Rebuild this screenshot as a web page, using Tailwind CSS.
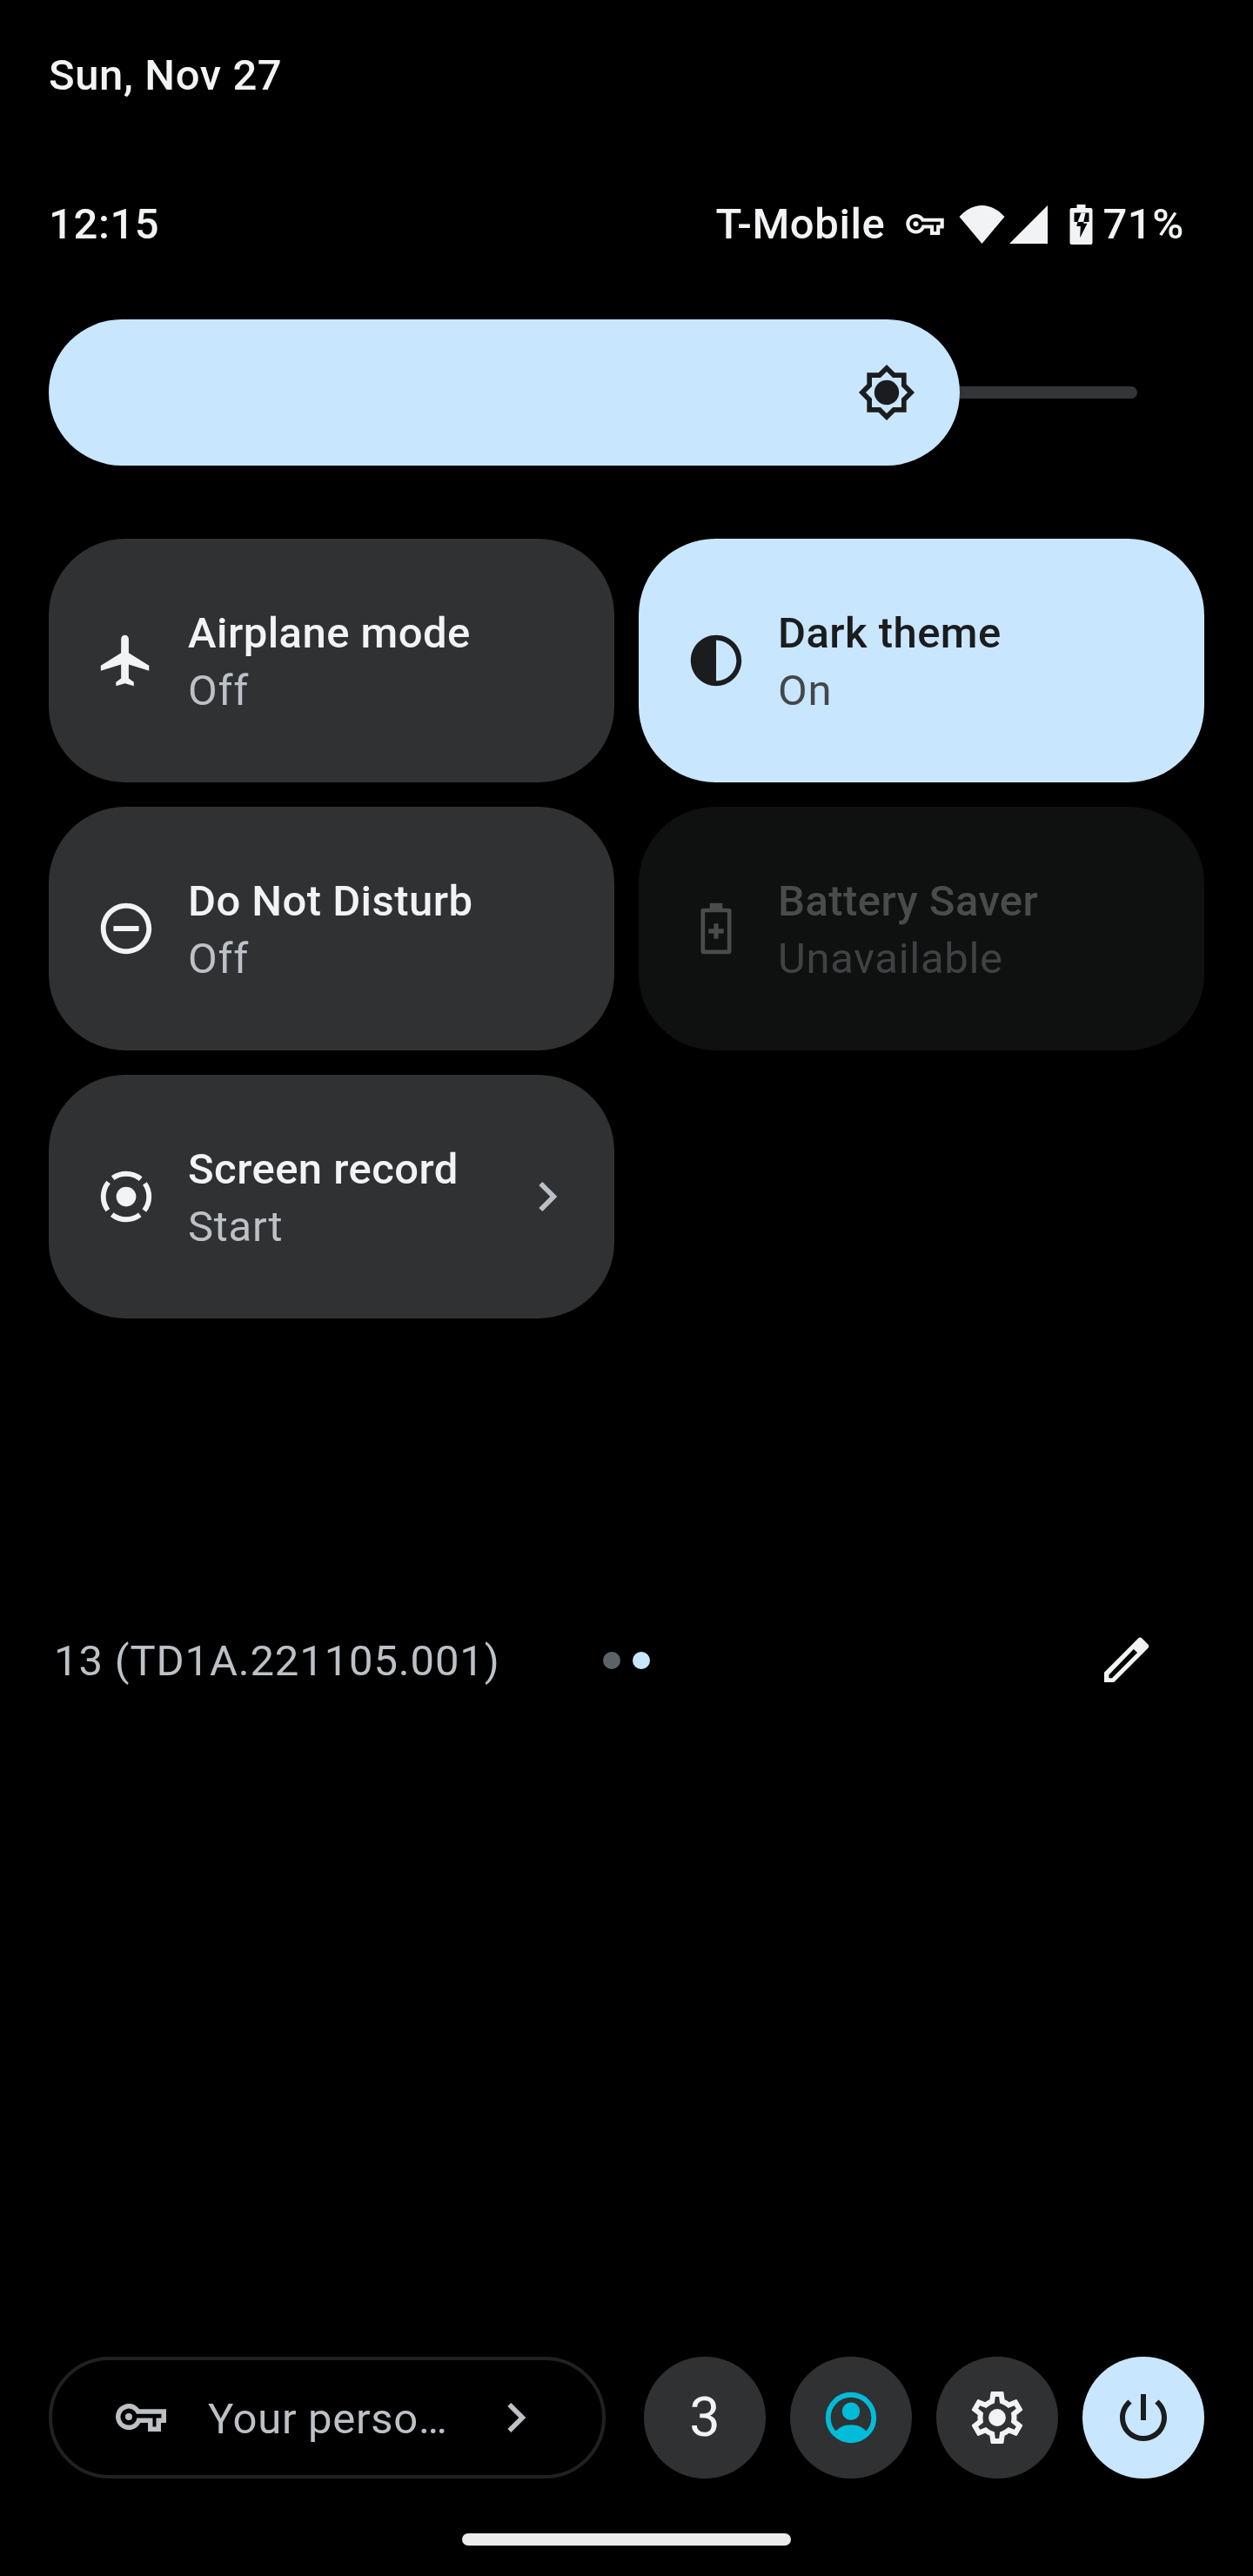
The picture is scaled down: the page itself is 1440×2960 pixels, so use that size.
<!DOCTYPE html>
<html lang="en">
<head>
  <meta charset="UTF-8">
  <meta name="viewport" content="width=device-width, initial-scale=1.0">
  <title>Quick Settings</title>
  <script src="https://cdn.jsdelivr.net/npm/@tailwindcss/browser@4"></script>
</head>
<body class="bg-black">
  <div class="w-[1440px] h-[2960px] bg-black flex flex-col font-['Roboto',sans-serif] text-[49px] leading-[58px] text-[#f1f3f4]">

    <!-- date -->
    <div class="pt-[58px] pl-[56px] font-medium tracking-[0.6px]">Sun, Nov 27</div>

    <!-- status bar -->
    <div class="mt-[113px] pl-[56px] pr-[79px] flex items-center justify-between font-medium tracking-[0.6px]">
      <span>12:15</span>
      <div class="flex items-center">
        <span>T-Mobile</span>
        <svg class="ml-[24px] w-[44px] h-[24px]" viewBox="0 0 58 32" fill="#f1f3f4"><path fill-rule="evenodd" d="M27.2 6.3H58V22H52V32H37V22H28.3A15 15 0 1 1 27.2 6.3ZM23.9 11.8H52.5V16.5H46.5V26.5H42.5V16.5H24.4A9.5 9.5 0 1 1 23.9 11.8Z"/><circle cx="15" cy="15" r="4"/></svg>
        <svg class="ml-[17px] w-[53px] h-[44px]" viewBox="0 0 53 44" fill="#f1f3f4"><path d="M0.5 13C8 5 17 0 26.5 0S45 5 52.5 13L26.5 44Z"/></svg>
        <svg class="ml-[5px] w-[44px] h-[44px]" viewBox="0 0 44 44" fill="#f1f3f4"><path d="M44 0V44H0Z"/></svg>
        <svg class="ml-[25px] w-[27px] h-[46px]" viewBox="0 0 26 46">
          <path fill="#f1f3f4" d="M8 0h10v4h6a2 2 0 012 2v38a2 2 0 01-2 2H2a2 2 0 01-2-2V6a2 2 0 012-2h6z"/>
          <path fill="#000" d="M5 9.5h17V20H5z"/>
          <path fill="#f1f3f4" d="M13 9.5h5L15.7 20H9z"/>
          <path fill="#000" d="M9 20L7.7 25h4.6l-.6 13.3L20 21.7h-4.3l.3-1.7z"/>
        </svg>
        <span class="ml-[11px]">71%</span>
      </div>
    </div>

    <!-- brightness slider -->
    <div class="mt-[80px] pl-[56px] flex items-center">
      <div class="w-[1047px] h-[168px] rounded-full bg-[#c9e6ff] flex items-center justify-end pr-[50px]">
        <svg class="w-[68px] h-[68px]" viewBox="0 0 24 24" fill="#1b1c1e"><path d="M20 8.69V4h-4.69L12 .69 8.69 4H4v4.69L.69 12 4 15.31V20h4.69L12 23.31 15.31 20H20v-4.69L23.31 12 20 8.69zm-2 5.79V18h-3.52L12 20.48 9.52 18H6v-3.52L3.52 12 6 9.52V6h3.52L12 3.52 14.48 6H18v3.52L20.48 12 18 14.48zM12 7a5 5 0 100 10 5 5 0 000-10z"/></svg>
      </div>
      <div class="w-[204px] h-[14px] rounded-r-full bg-[#333537]"></div>
    </div>

    <!-- tiles -->
    <div class="mt-[84px] pl-[56px] grid grid-cols-[650px_650px] auto-rows-[280px] gap-x-[28px] gap-y-[28px]">

      <div class="rounded-[88px] bg-[#303133] flex items-center pl-[54px]">
        <svg class="w-[70px] h-[70px] mr-[36px]" viewBox="0 0 24 24" fill="#f1f3f4"><path d="M21 16v-2l-8-5V3.5c0-.83-.67-1.5-1.5-1.5S10 2.67 10 3.5V9l-8 5v2l8-2.5V19l-2 1.5V22l3.5-1 3.5 1v-1.5L13 19v-5.5l8 2.5z"/></svg>
        <div class="pt-[4px] leading-[68px]">
          <div class="font-medium tracking-[0.45px] text-[#f1f3f4]">Airplane mode</div>
          <div class="-mt-[2px] tracking-[0.7px] text-[#bdc1c6]">Off</div>
        </div>
      </div>

      <div class="rounded-[88px] bg-[#c9e6ff] flex items-center pl-[54px]">
        <svg class="w-[70px] h-[70px] mr-[36px]" viewBox="0 0 24 24" fill="#1b1c1e"><path d="M12 2C6.48 2 2 6.48 2 12s4.48 10 10 10 10-4.48 10-10S17.52 2 12 2zm0 18V4c4.41 0 8 3.59 8 8s-3.59 8-8 8z"/></svg>
        <div class="pt-[4px] leading-[68px]">
          <div class="font-medium tracking-[0.45px] text-[#1b1c1e]">Dark theme</div>
          <div class="-mt-[2px] tracking-[0.7px] text-[#44474a]">On</div>
        </div>
      </div>

      <div class="rounded-[88px] bg-[#303133] flex items-center pl-[54px]">
        <svg class="w-[70px] h-[70px] mr-[36px]" viewBox="0 0 24 24" fill="#f1f3f4"><path d="M12 2C6.48 2 2 6.48 2 12s4.48 10 10 10 10-4.48 10-10S17.52 2 12 2zm0 18c-4.41 0-8-3.59-8-8s3.59-8 8-8 8 3.59 8 8-3.59 8-8 8zM7 11h10v2H7z"/></svg>
        <div class="pt-[4px] leading-[68px]">
          <div class="font-medium tracking-[0.45px] text-[#f1f3f4]">Do Not Disturb</div>
          <div class="-mt-[2px] tracking-[0.7px] text-[#bdc1c6]">Off</div>
        </div>
      </div>

      <div class="rounded-[88px] bg-[#0f1111] flex items-center pl-[54px]">
        <svg class="w-[70px] h-[70px] mr-[36px]" viewBox="0 0 24 24" fill="#4a4b4b"><path fill-rule="evenodd" d="M9.5 2h5v2H17a1 1 0 011 1v16a1 1 0 01-1 1H7a1 1 0 01-1-1V5a1 1 0 011-1h2.5zM7.6 5.6v14.8h8.8V5.6z"/><path d="M11.1 10h1.8v2.1H15v1.8h-2.1V16h-1.8v-2.1H9v-1.8h2.1z"/></svg>
        <div class="pt-[4px] leading-[68px]">
          <div class="font-medium tracking-[0.45px] text-[#4a4b4b]">Battery Saver</div>
          <div class="-mt-[2px] tracking-[0.7px] text-[#3f4143]">Unavailable</div>
        </div>
      </div>

      <div class="rounded-[88px] bg-[#303133] flex items-center pl-[54px] pr-[43px]">
        <svg class="w-[70px] h-[70px] mr-[36px]" viewBox="0 0 24 24" fill="none" stroke="#f1f3f4" stroke-width="2">
          <circle cx="12" cy="12" r="3.9" fill="#f1f3f4" stroke="none"/>
          <circle cx="12" cy="12" r="9" stroke-dasharray="11.8 2.34" stroke-dashoffset="5.9"/>
        </svg>
        <div class="pt-[4px] leading-[68px]">
          <div class="font-medium tracking-[0.45px] text-[#f1f3f4]">Screen record</div>
          <div class="-mt-[2px] tracking-[0.7px] text-[#bdc1c6]">Start</div>
        </div>
        <svg class="ml-auto w-[68px] h-[68px]" viewBox="0 0 24 24" fill="#bdc1c6"><path d="M10 6L8.59 7.41 13.17 12l-4.58 4.59L10 18l6-6z"/></svg>
      </div>
    </div>

    <!-- build number row -->
    <div class="mt-[358px] h-[72px] pl-[62px] pr-[108px] flex items-center">
      <span class="w-[631px] tracking-[0.85px] text-[#bdc1c6]">13 (TD1A.221105.001)</span>
      <div class="mb-[3px] flex items-center gap-[14px]">
        <div class="w-[20px] h-[20px] rounded-full bg-[#5b6369]"></div>
        <div class="w-[20px] h-[20px] rounded-full bg-[#c9e6ff]"></div>
      </div>
      <svg class="ml-auto mb-[7px] w-[72px] h-[72px]" viewBox="0 0 24 24" fill="#f1f3f4"><path fill-rule="evenodd" d="M3 17.25V21h3.75L19.8 7.95c.39-.39.39-1.02 0-1.41l-2.34-2.34a1 1 0 00-1.41 0zM14.3 8.3l1.4 1.4L6 19.4H4.8v-1.2z"/></svg>
    </div>

    <!-- footer actions -->
    <div class="mt-auto pl-[56px] flex items-center">
      <div class="w-[640px] h-[140px] rounded-full border-[4px] border-[#1f2123] flex items-center pl-[73px]">
        <svg class="w-[58px] h-[32px] mr-[48px]" viewBox="0 0 58 32" fill="#bdc1c6"><path fill-rule="evenodd" d="M27.2 6.3H58V22H52V32H37V22H28.3A15 15 0 1 1 27.2 6.3ZM23.9 11.8H52.5V16.5H46.5V26.5H42.5V16.5H24.4A9.5 9.5 0 1 1 23.9 11.8Z"/><circle cx="15" cy="15" r="4"/></svg>
        <span class="w-[320px] pt-[4px] tracking-[0.7px] text-[#bdc1c6]">Your perso…</span>
        <svg class="w-[68px] h-[68px]" viewBox="0 0 24 24" fill="#bdc1c6"><path d="M10 6L8.59 7.41 13.17 12l-4.58 4.59L10 18l6-6z"/></svg>
      </div>
      <div class="ml-[44px] flex items-center gap-[28px]">
        <div class="w-[140px] h-[140px] rounded-full bg-[#303133] flex items-center justify-center text-[63px] text-[#f1f3f4]">3</div>
        <div class="w-[140px] h-[140px] rounded-full bg-[#303133] flex items-center justify-center">
          <svg class="w-[70px] h-[70px]" viewBox="0 0 24 24" fill="#00bcd9">
            <circle cx="12" cy="12" r="9" fill="none" stroke="#00bcd9" stroke-width="2"/>
            <circle cx="12" cy="9.5" r="3.5"/>
            <path d="M5.5 18C7 15.8 9.3 14.8 12 14.8s5 1 6.5 3.2A10 10 0 0112 22a10 10 0 01-6.5-4z"/>
          </svg>
        </div>
        <div class="w-[140px] h-[140px] rounded-full bg-[#303133] flex items-center justify-center">
          <svg class="w-[72px] h-[72px]" viewBox="0 0 24 24" fill="#f1f3f4"><path d="M19.43 12.98c.04-.32.07-.64.07-.98 0-.34-.03-.66-.07-.98l2.11-1.65c.19-.15.24-.42.12-.64l-2-3.46c-.09-.16-.26-.25-.44-.25-.06 0-.12.01-.17.03l-2.49 1c-.52-.4-1.08-.73-1.69-.98l-.38-2.65C14.46 2.18 14.25 2 14 2h-4c-.25 0-.46.18-.49.42l-.38 2.65c-.61.25-1.17.59-1.69.98l-2.49-1c-.06-.02-.12-.03-.18-.03-.17 0-.34.09-.43.25l-2 3.46c-.13.22-.07.49.12.64l2.11 1.65c-.04.32-.07.65-.07.98 0 .33.03.66.07.98l-2.11 1.65c-.19.15-.24.42-.12.64l2 3.46c.09.16.26.25.44.25.06 0 .12-.01.17-.03l2.49-1c.52.4 1.08.73 1.69.98l.38 2.65c.03.24.24.42.49.42h4c.25 0 .46-.18.49-.42l.38-2.65c.61-.25 1.17-.59 1.69-.98l2.49 1c.06.02.12.03.18.03.17 0 .34-.09.43-.25l2-3.46c.12-.22.07-.49-.12-.64l-2.11-1.65zm-1.98-1.71c.04.31.05.52.05.73 0 .21-.02.43-.05.73l-.14 1.13.89.7 1.08.84-.7 1.21-1.27-.51-1.04-.42-.9.68c-.43.32-.84.56-1.25.73l-1.06.43-.16 1.13-.2 1.35h-1.4l-.19-1.35-.16-1.13-1.06-.43c-.43-.18-.83-.41-1.23-.71l-.91-.7-1.06.43-1.27.51-.7-1.21 1.08-.84.89-.7-.14-1.13c-.03-.31-.05-.54-.05-.74s.02-.43.05-.73l.14-1.13-.89-.7-1.08-.84.7-1.21 1.27.51 1.04.42.9-.68c.43-.32.84-.56 1.25-.73l1.06-.43.16-1.13.2-1.35h1.39l.19 1.35.16 1.13 1.06.43c.43.18.83.41 1.23.71l.91.7 1.06-.43 1.27-.51.7 1.21-1.07.85-.89.7.14 1.13zM12 8.7a3.3 3.3 0 100 6.6 3.3 3.3 0 000-6.6z"/></svg>
        </div>
        <div class="w-[140px] h-[140px] rounded-full bg-[#c9e6ff] flex items-center justify-center">
          <svg class="w-[72px] h-[72px]" viewBox="0 0 24 24" fill="#1b1c1e"><path d="M13 3h-2v10h2V3zm4.83 2.17l-1.42 1.42C17.99 7.86 19 9.81 19 12c0 3.87-3.13 7-7 7s-7-3.13-7-7c0-2.19 1.01-4.14 2.58-5.42L6.17 5.17C4.23 6.82 3 9.26 3 12c0 4.97 4.03 9 9 9s9-4.03 9-9c0-2.74-1.23-5.18-3.17-6.83z"/></svg>
        </div>
      </div>
    </div>

    <!-- home bar -->
    <div class="mt-[63px] mb-[35px] mx-auto w-[378px] h-[14px] rounded-full bg-[#ebebeb]"></div>
  </div>
</body>
</html>
